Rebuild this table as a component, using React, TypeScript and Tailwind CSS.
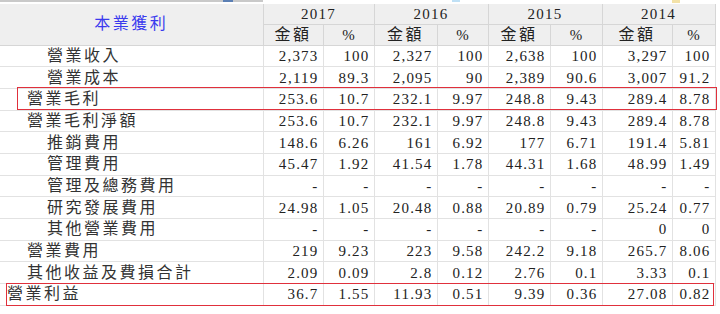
const YEARS = ["2017", "2016", "2015", "2014"];

type Row = { label: string; level: 0 | 1 | 2; values: string[] };

const ROWS: Row[] = [
  { label: "營業收入", level: 2, values: ["2,373", "100", "2,327", "100", "2,638", "100", "3,297", "100"] },
  { label: "營業成本", level: 2, values: ["2,119", "89.3", "2,095", "90", "2,389", "90.6", "3,007", "91.2"] },
  { label: "營業毛利", level: 1, values: ["253.6", "10.7", "232.1", "9.97", "248.8", "9.43", "289.4", "8.78"] },
  { label: "營業毛利淨額", level: 1, values: ["253.6", "10.7", "232.1", "9.97", "248.8", "9.43", "289.4", "8.78"] },
  { label: "推銷費用", level: 2, values: ["148.6", "6.26", "161", "6.92", "177", "6.71", "191.4", "5.81"] },
  { label: "管理費用", level: 2, values: ["45.47", "1.92", "41.54", "1.78", "44.31", "1.68", "48.99", "1.49"] },
  { label: "管理及總務費用", level: 2, values: ["-", "-", "-", "-", "-", "-", "-", "-"] },
  { label: "研究發展費用", level: 2, values: ["24.98", "1.05", "20.48", "0.88", "20.89", "0.79", "25.24", "0.77"] },
  { label: "其他營業費用", level: 2, values: ["-", "-", "-", "-", "-", "-", "0", "0"] },
  { label: "營業費用", level: 1, values: ["219", "9.23", "223", "9.58", "242.2", "9.18", "265.7", "8.06"] },
  { label: "其他收益及費損合計", level: 1, values: ["2.09", "0.09", "2.8", "0.12", "2.76", "0.1", "3.33", "0.1"] },
  { label: "營業利益", level: 0, values: ["36.7", "1.55", "11.93", "0.51", "9.39", "0.36", "27.08", "0.82"] },
];

const INDENT = ["pl-[7px]", "pl-[27px]", "pl-[47px]"];
const COLS = [263, 60, 51, 63, 51, 62, 52, 70, 43];

export default function App() {
  return (
    <div className="relative flex h-[314px] w-[720px] flex-col overflow-hidden bg-white font-['Liberation_Serif','Noto_Sans_CJK_TC',serif] text-[#222]">
      {/* cut-off strip from the section above */}
      <div className="relative h-[4px] shrink-0">
        <div className="h-[2px] w-[263px] bg-[#c9c9c9]" />
        <div className="absolute left-[223px] top-0 h-[2px] w-[10px] bg-[#5b7fb4]" />
        <div className="absolute left-[452px] top-0 h-[2px] w-[8px] bg-[#bfe0f5]" />
        <div className="absolute left-[672px] top-0 h-[3px] w-[8px] bg-[#f3e2a8]" />
      </div>

      <table className="w-[715px] table-fixed border-collapse text-[15px] leading-[14px]">
        <colgroup>
          {COLS.map((w, i) => (
            <col key={i} style={{ width: w }} />
          ))}
        </colgroup>
        <thead className="bg-[#efefef]">
          <tr className="h-[20px]">
            <th
              rowSpan={2}
              className="border border-t-0 border-l-0 border-[#d6d6d6] p-0 text-center text-[16px] font-normal tracking-[2.5px] text-[#3a3aee]"
            >
              本業獲利
            </th>
            {YEARS.map((y) => (
              <th
                key={y}
                colSpan={2}
                className="border border-t-0 border-[#d6d6d6] p-0 text-center font-normal tracking-[1.2px]"
              >
                {y}
              </th>
            ))}
          </tr>
          <tr className="h-[21px]">
            {YEARS.map((y) => (
              <>
                <th key={y + "a"} className="border border-[#d6d6d6] p-0 text-center text-[16px] font-normal tracking-[2.5px]">
                  金額
                </th>
                <th key={y + "p"} className="border border-[#d6d6d6] p-0 text-center font-normal">
                  %
                </th>
              </>
            ))}
          </tr>
        </thead>
        <tbody>
          {ROWS.map((r) => (
            <tr key={r.label} className="h-[21.7px]">
              <td
                className={`border border-l-0 border-[#e2e2e2] py-0 ${INDENT[r.level]} whitespace-nowrap text-[16px] tracking-[2.5px] text-[#333]`}
              >
                {r.label}
              </td>
              {r.values.map((v, i) => (
                <td key={i} className="border border-[#e2e2e2] py-0 pl-0 pr-[4px] text-right tracking-[1.2px]">
                  {v}
                </td>
              ))}
            </tr>
          ))}
        </tbody>
      </table>

      {/* highlight boxes */}
      <div className="absolute left-[17px] top-[87px] h-[23px] w-[700px] border border-[#e0303c]" />
      <div className="absolute left-[6px] top-[283px] h-[23px] w-[708px] border border-[#e0303c]" />
    </div>
  );
}
